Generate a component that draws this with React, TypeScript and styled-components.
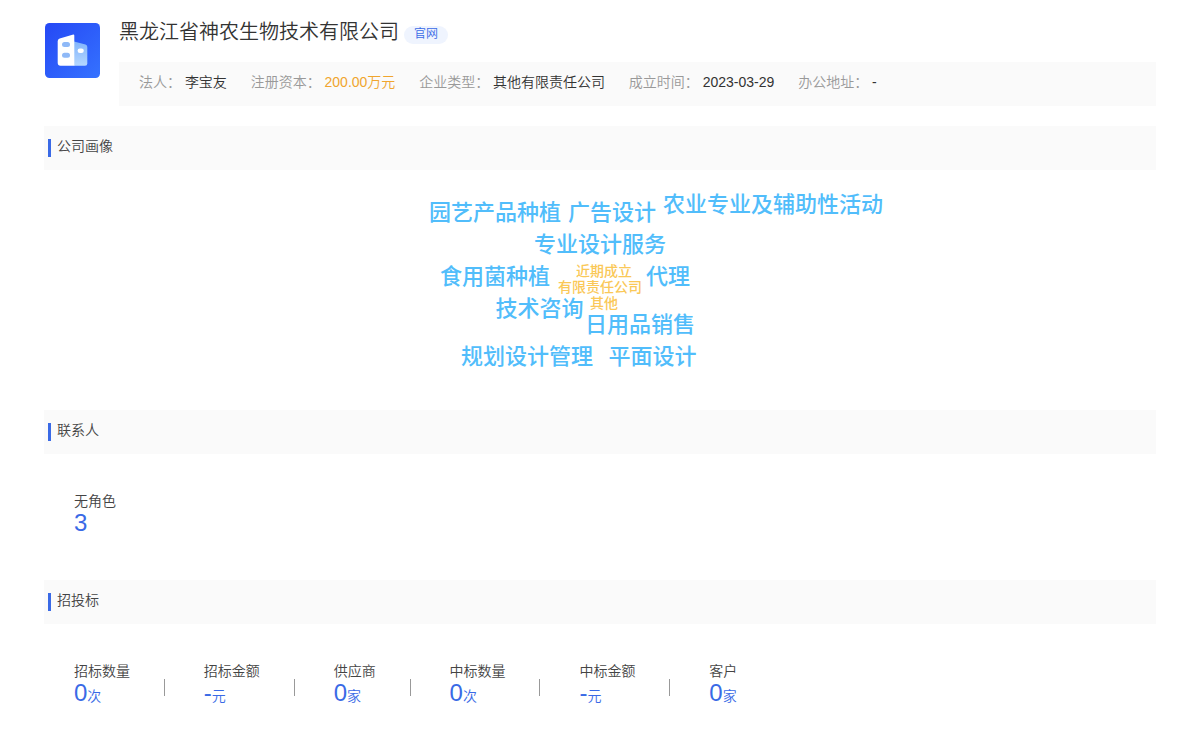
import React from "react";
import styled, { createGlobalStyle } from "styled-components";

const GlobalStyle = createGlobalStyle`
  * { box-sizing: border-box; }
  body {
    margin: 0;
    background: #fff;
    color: #444;
    font-family: "Liberation Sans", "Noto Sans CJK SC", sans-serif;
    font-size: 14px;
    font-weight: 350;
  }
`;

const Page = styled.main`
  height: 752px;
  padding: 23px 44px 0;
  overflow: hidden;
`;

const Header = styled.header`
  display: flex;
  height: 83px;
  padding-left: 1px;
`;

const Logo = styled.svg`
  flex: none;
  width: 55px;
  height: 55px;
  margin-right: 19px;
`;

const Summary = styled.div`
  flex: 1;
  display: flex;
  flex-direction: column;
  justify-content: space-between;
`;

const TitleRow = styled.div`
  display: flex;
  height: 22px;
  align-items: flex-start;
`;

const CompanyName = styled.h1`
  margin: -6px 0 0;
  font-size: 20px;
  line-height: 30px;
  font-weight: 350;
  color: #333;
`;

const Badge = styled.span`
  margin: 3px 0 0 5px;
  padding: 0 10px;
  height: 18px;
  line-height: 17px;
  border-radius: 9px;
  background: #eff4fe;
  color: #3a6ae6;
  font-size: 12px;
`;

const InfoBar = styled.dl`
  display: flex;
  align-items: flex-start;
  gap: 23.8px;
  height: 44px;
  margin: 0;
  padding: 10px 20px;
  background: #fafafa;
  line-height: 20px;
  white-space: nowrap;
`;

const InfoItem = styled.div`
  display: flex;
  gap: 3.89px;
`;

const InfoLabel = styled.dt`
  color: #999;
`;

const InfoValue = styled.dd<{ $accent?: boolean }>`
  margin: 0;
  color: ${(p) => (p.$accent ? "#f0a52e" : "#333")};
`;

const Section = styled.section<{ $height: number }>`
  height: ${(p) => p.$height}px;
`;

const SectionTitle = styled.h2`
  display: flex;
  height: 44px;
  margin: 0;
  padding: 10px 4px;
  background: #fafafa;
  font-size: 14px;
  font-weight: 350;
  line-height: 20px;

  &::before {
    content: "";
    width: 3px;
    height: 18px;
    margin: 3px 6px 0 0;
    background: #3a6ae6;
  }
`;

const Portrait = styled(Section)`
  padding-top: 20px;
`;

const Cloud = styled.div`
  position: relative;
  height: 240px;
`;

const Word = styled.span<{ $x: number; $y: number; $small?: boolean }>`
  position: absolute;
  left: ${(p) => p.$x}px;
  top: ${(p) => p.$y}px;
  transform: translateY(-50%);
  font-size: ${(p) => (p.$small ? 14 : 22)}px;
  line-height: ${(p) => (p.$small ? 16 : 32)}px;
  font-weight: 500;
  color: ${(p) => (p.$small ? "#fac858" : "#51bdfb")};
  white-space: nowrap;
`;

const Stats = styled.div`
  display: flex;
  padding: 37px 30px 0;
`;

const Stat = styled.div`
  line-height: 20px;
  white-space: nowrap;
`;

const Figure = styled.div`
  height: 24px;
  line-height: 24px;
  color: #3a6ae6;
`;

const Amount = styled.span`
  font-size: 24px;
`;

const Divider = styled.i`
  width: 1px;
  height: 17px;
  margin: 18px 39px 0 33.86px;
  background: #999;
`;

const info = [
  { label: "法人：", value: "李宝友" },
  { label: "注册资本：", value: "200.00万元", accent: true },
  { label: "企业类型：", value: "其他有限责任公司" },
  { label: "成立时间：", value: "2023-03-29" },
  { label: "办公地址：", value: "-" },
];

const words = [
  { text: "园艺产品种植", x: 385, y: 43 },
  { text: "广告设计", x: 524, y: 43 },
  { text: "农业专业及辅助性活动", x: 619, y: 35 },
  { text: "专业设计服务", x: 490, y: 75 },
  { text: "食用菌种植", x: 396, y: 107 },
  { text: "代理", x: 602, y: 107 },
  { text: "技术咨询", x: 451.5, y: 139 },
  { text: "日用品销售", x: 541, y: 155 },
  { text: "规划设计管理", x: 417, y: 187 },
  { text: "平面设计", x: 564.5, y: 187 },
  { text: "近期成立", x: 532, y: 101, small: true },
  { text: "有限责任公司", x: 514, y: 117, small: true },
  { text: "其他", x: 546, y: 133, small: true },
];

type StatData = { label: string; amount: string; unit?: string };

const contacts: StatData[] = [{ label: "无角色", amount: "3" }];

const bids: StatData[] = [
  { label: "招标数量", amount: "0", unit: "次" },
  { label: "招标金额", amount: "-", unit: "元" },
  { label: "供应商", amount: "0", unit: "家" },
  { label: "中标数量", amount: "0", unit: "次" },
  { label: "中标金额", amount: "-", unit: "元" },
  { label: "客户", amount: "0", unit: "家" },
];

const StatList = ({ items }: { items: StatData[] }) => (
  <Stats>
    {items.map((item, i) => (
      <React.Fragment key={item.label}>
        {i > 0 && <Divider />}
        <Stat>
          <div>{item.label}</div>
          <Figure>
            <Amount>{item.amount}</Amount>
            {item.unit}
          </Figure>
        </Stat>
      </React.Fragment>
    ))}
  </Stats>
);

const CompanyLogo = () => (
  <Logo viewBox="0 0 55 55">
    <defs>
      <linearGradient id="tile" x1="0" y1="0" x2="1" y2="1">
        <stop offset="0" stopColor="#2548f5" />
        <stop offset="1" stopColor="#3572ff" />
      </linearGradient>
      <linearGradient id="side" x1="0" y1="0" x2="0" y2="1">
        <stop offset="0" stopColor="#82b4fb" />
        <stop offset="1" stopColor="#b4d7ff" />
      </linearGradient>
    </defs>
    <rect width="55" height="55" rx="4.5" fill="url(#tile)" />
    <path d="M29 18.5 40.5 21.5Q42.3 22 42.3 24V40.5Q42.3 42.7 40 42.7H29Z" fill="url(#side)" />
    <path d="M29.3 11.8V42.7H15.5Q12.7 42.7 12.7 39.7V18Q12.7 16 14.7 15.4L27.5 11.7Q29.3 11.2 29.3 12.5Z" fill="#fff" />
    <rect x="17" y="19" width="8" height="5" rx="2.5" fill="#8fb9f7" />
    <rect x="17" y="29.7" width="8" height="5" rx="2.5" fill="#8fb9f7" />
    <rect x="32.6" y="25.5" width="6.2" height="4.6" rx="2.3" fill="#fff" />
  </Logo>
);

export default function App() {
  return (
    <Page lang="zh-CN">
      <GlobalStyle />
      <Header>
        <CompanyLogo />
        <Summary>
          <TitleRow>
            <CompanyName>黑龙江省神农生物技术有限公司</CompanyName>
            <Badge>官网</Badge>
          </TitleRow>
          <InfoBar>
            {info.map((item) => (
              <InfoItem key={item.label}>
                <InfoLabel>{item.label}</InfoLabel>
                <InfoValue $accent={item.accent}>{item.value}</InfoValue>
              </InfoItem>
            ))}
          </InfoBar>
        </Summary>
      </Header>
      <Portrait $height={304}>
        <SectionTitle>公司画像</SectionTitle>
        <Cloud>
          {words.map((w) => (
            <Word key={w.text} $x={w.x} $y={w.y} $small={w.small}>
              {w.text}
            </Word>
          ))}
        </Cloud>
      </Portrait>
      <Section $height={170}>
        <SectionTitle>联系人</SectionTitle>
        <StatList items={contacts} />
      </Section>
      <Section $height={172}>
        <SectionTitle>招投标</SectionTitle>
        <StatList items={bids} />
      </Section>
    </Page>
  );
}
